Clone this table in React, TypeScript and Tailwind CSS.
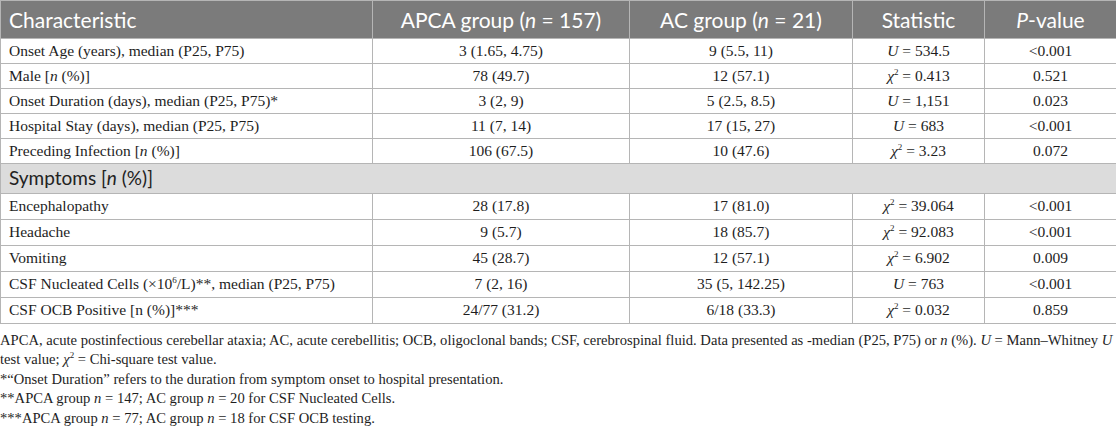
import React from "react"

type Row = {
  label: React.ReactNode
  apca: string
  ac: string
  stat: React.ReactNode
  p: string
}

const sup = "text-[9px] relative -top-[6px]"

const U = (v: string) => (
  <>
    <i>U</i> = {v}
  </>
)
const Chi = (v: string) => (
  <>
    <i>χ</i>
    <sup className={sup}>2</sup> = {v}
  </>
)

const TOP: Row[] = [
  { label: "Onset Age (years), median (P25, P75)", apca: "3 (1.65, 4.75)", ac: "9 (5.5, 11)", stat: U("534.5"), p: "<0.001" },
  { label: <>Male [<i>n</i> (%)]</>, apca: "78 (49.7)", ac: "12 (57.1)", stat: Chi("0.413"), p: "0.521" },
  { label: "Onset Duration (days), median (P25, P75)*", apca: "3 (2, 9)", ac: "5 (2.5, 8.5)", stat: U("1,151"), p: "0.023" },
  { label: "Hospital Stay (days), median (P25, P75)", apca: "11 (7, 14)", ac: "17 (15, 27)", stat: U("683"), p: "<0.001" },
  { label: <>Preceding Infection [<i>n</i> (%)]</>, apca: "106 (67.5)", ac: "10 (47.6)", stat: Chi("3.23"), p: "0.072" },
]

const SYMPTOMS: Row[] = [
  { label: "Encephalopathy", apca: "28 (17.8)", ac: "17 (81.0)", stat: Chi("39.064"), p: "<0.001" },
  { label: "Headache", apca: "9 (5.7)", ac: "18 (85.7)", stat: Chi("92.083"), p: "<0.001" },
  { label: "Vomiting", apca: "45 (28.7)", ac: "12 (57.1)", stat: Chi("6.902"), p: "0.009" },
  {
    label: (
      <>
        CSF Nucleated Cells (×10<sup className={sup}>6</sup>/L)**, median (P25, P75)
      </>
    ),
    apca: "7 (2, 16)",
    ac: "35 (5, 142.25)",
    stat: U("763"),
    p: "<0.001",
  },
  { label: "CSF OCB Positive [n (%)]***", apca: "24/77 (31.2)", ac: "6/18 (33.3)", stat: Chi("0.032"), p: "0.859" },
]

const cell = "border border-[#b5b5b5] px-2 py-0"

function BodyRow({ r, h }: { r: Row; h: string }) {
  return (
    <tr className={h}>
      <td className={`${cell} text-left`}>{r.label}</td>
      <td className={`${cell} text-center`}>{r.apca}</td>
      <td className={`${cell} text-center`}>{r.ac}</td>
      <td className={`${cell} text-center`}>{r.stat}</td>
      <td className={`${cell} text-center`}>{r.p}</td>
    </tr>
  )
}

export default function App() {
  return (
    <div className="w-[1116px] h-[429px] bg-white text-[#1e1e1e] font-['Liberation_Serif',serif] text-[15.5px] overflow-hidden">
      <table className="w-full border-collapse table-fixed">
        <colgroup>
          <col className="w-[372px]" />
          <col className="w-[257px]" />
          <col className="w-[223px]" />
          <col className="w-[132px]" />
          <col className="w-[132px]" />
        </colgroup>
        <thead>
          <tr className="h-[38px] bg-[#7b7b7b] text-white font-['Lato',sans-serif] text-[21px]">
            <th className={`${cell} text-left font-normal`}>Characteristic</th>
            <th className={`${cell} font-normal`}>
              APCA group (<i>n</i> = 157)
            </th>
            <th className={`${cell} font-normal`}>
              AC group (<i>n</i> = 21)
            </th>
            <th className={`${cell} font-normal`}>Statistic</th>
            <th className={`${cell} font-normal`}>
              <i>P</i>-value
            </th>
          </tr>
        </thead>
        <tbody>
          {TOP.map((r, i) => (
            <BodyRow key={i} r={r} h="h-[25px]" />
          ))}
          <tr className="h-[29px] bg-[#dcdcdc]">
            <td className={`${cell} border-r-0 font-['Lato',sans-serif] text-[19px] text-[#222]`}>
              Symptoms [<i>n</i> (%)]
            </td>
            <td colSpan={4} className="border border-l-0 border-[#b5b5b5]" />
          </tr>
          {SYMPTOMS.map((r, i) => (
            <BodyRow key={i} r={r} h="h-[26px]" />
          ))}
        </tbody>
      </table>

      <div className="mt-[7px] leading-[19.5px] text-[14.6px]">
        <p className="whitespace-nowrap">
          APCA, acute postinfectious cerebellar ataxia; AC, acute cerebellitis; OCB, oligoclonal bands; CSF,
          cerebrospinal fluid. Data presented as -median (P25, P75) or <i>n</i> (%). <i>U</i> = Mann–Whitney <i>U</i>
          <br />
          test value; <i>χ</i>
          <sup className={sup}>2</sup> = Chi-square test value.
        </p>
        <p>*“Onset Duration” refers to the duration from symptom onset to hospital presentation.</p>
        <p>
          **APCA group <i>n</i> = 147; AC group <i>n</i> = 20 for CSF Nucleated Cells.
        </p>
        <p>
          ***APCA group <i>n</i> = 77; AC group <i>n</i> = 18 for CSF OCB testing.
        </p>
      </div>
    </div>
  )
}
